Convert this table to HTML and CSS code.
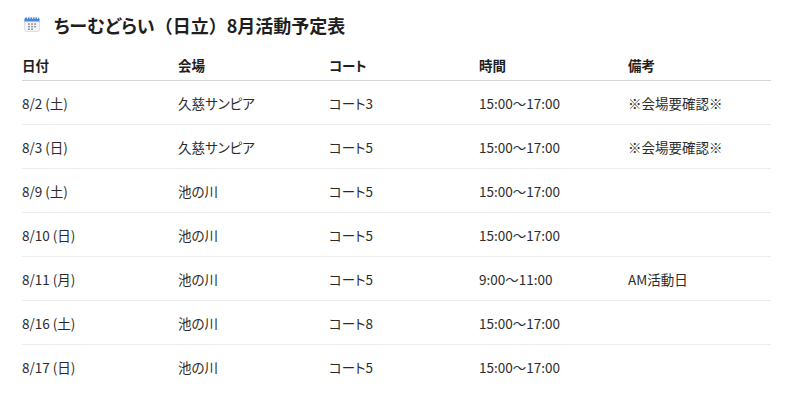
FILE: index.html
```html
<!DOCTYPE html>
<html lang="ja">
<head>
<meta charset="utf-8">
<link rel="stylesheet" href="styles.css">
</head>
<body>
<div class="page">
  <h1 class="title">
    <svg class="cal" width="16" height="16" viewBox="0 0 16 16">
      <rect x="0.5" y="1.5" width="15" height="14" rx="2" fill="#f3f4f7" stroke="#c9ccd3" stroke-width="0.6"/>
      <path d="M0.5 3.5a2 2 0 0 1 2-2h11a2 2 0 0 1 2 2V5.5H0.5z" fill="#4a86d8"/>
      <g fill="#e9eef8">
        <rect x="3" y="0.5" width="1" height="2.5" rx="0.5"/>
        <rect x="5.5" y="0.5" width="1" height="2.5" rx="0.5"/>
        <rect x="8" y="0.5" width="1" height="2.5" rx="0.5"/>
        <rect x="10.5" y="0.5" width="1" height="2.5" rx="0.5"/>
        <rect x="13" y="0.5" width="1" height="2.5" rx="0.5"/>
      </g>
      <g fill="#8a8f99">
        <rect x="4" y="7.3" width="1.8" height="1.5"/>
        <rect x="7.1" y="7.3" width="1.8" height="1.5"/>
        <rect x="10.2" y="7.3" width="1.8" height="1.5"/>
        <rect x="4" y="9.9" width="1.8" height="1.5"/>
        <rect x="7.1" y="9.9" width="1.8" height="1.5"/>
        <rect x="10.2" y="9.9" width="1.8" height="1.5"/>
        <rect x="4" y="12.5" width="1.8" height="1.5"/>
        <rect x="7.1" y="12.5" width="1.8" height="1.5"/>
      </g>
    </svg>
    <span>ちーむどらい<span class="fw">（</span>日立<span class="fw">）</span>8月活動予定表</span>
  </h1>
  <table class="sched">
    <thead>
      <tr><th class="c1">日付</th><th class="c2">会場</th><th class="c3">コート</th><th class="c4">時間</th><th>備考</th></tr>
    </thead>
    <tbody>
      <tr><td>8/2 (土)</td><td>久慈サンピア</td><td>コート3</td><td>15:00～17:00</td><td>※会場要確認※</td></tr>
      <tr><td>8/3 (日)</td><td>久慈サンピア</td><td>コート5</td><td>15:00～17:00</td><td>※会場要確認※</td></tr>
      <tr><td>8/9 (土)</td><td>池の川</td><td>コート5</td><td>15:00～17:00</td><td></td></tr>
      <tr><td>8/10 (日)</td><td>池の川</td><td>コート5</td><td>15:00～17:00</td><td></td></tr>
      <tr><td>8/11 (月)</td><td>池の川</td><td>コート5</td><td>9:00～11:00</td><td>AM活動日</td></tr>
      <tr><td>8/16 (土)</td><td>池の川</td><td>コート8</td><td>15:00～17:00</td><td></td></tr>
      <tr><td>8/17 (日)</td><td>池の川</td><td>コート5</td><td>15:00～17:00</td><td></td></tr>
    </tbody>
  </table>
</div>
</body>
</html>
```
FILE: styles.css
```css
html, body {
  margin: 0;
  padding: 0;
  background: #ffffff;
}
body {
  font-family: "Noto Sans CJK JP", "Noto Sans", sans-serif;
  color: #2b2b2b;
  font-feature-settings: "palt";
}
.page {
  padding: 10px 0 0 22px;
  width: 749px;
}
.title {
  display: flex;
  align-items: center;
  gap: 14px;
  margin: 0 0 0 2px;
  height: 30px;
  font-size: 18px;
  font-weight: 700;
  color: #1e1e1e;
}
.fw {
  font-feature-settings: normal;
}
.cal {
  flex: none;
  position: relative;
  top: -1px;
}
.sched {
  width: 749px;
  border-collapse: collapse;
  margin-top: 10px;
  font-size: 13.5px;
}
.sched th {
  text-align: left;
  font-weight: 700;
  color: #1e1e1e;
  padding: 0;
  height: 30px;
  vertical-align: middle;
  border-bottom: 1px solid #d6d6d6;
}
.sched td {
  padding: 0;
  height: 43px;
  vertical-align: middle;
  border-bottom: 1px solid #ececec;
}
.sched tbody tr:last-child td {
  border-bottom: none;
}
.c1 { width: 156px; }
.c2 { width: 151px; }
.c3 { width: 150px; }
.c4 { width: 149px; }
```
